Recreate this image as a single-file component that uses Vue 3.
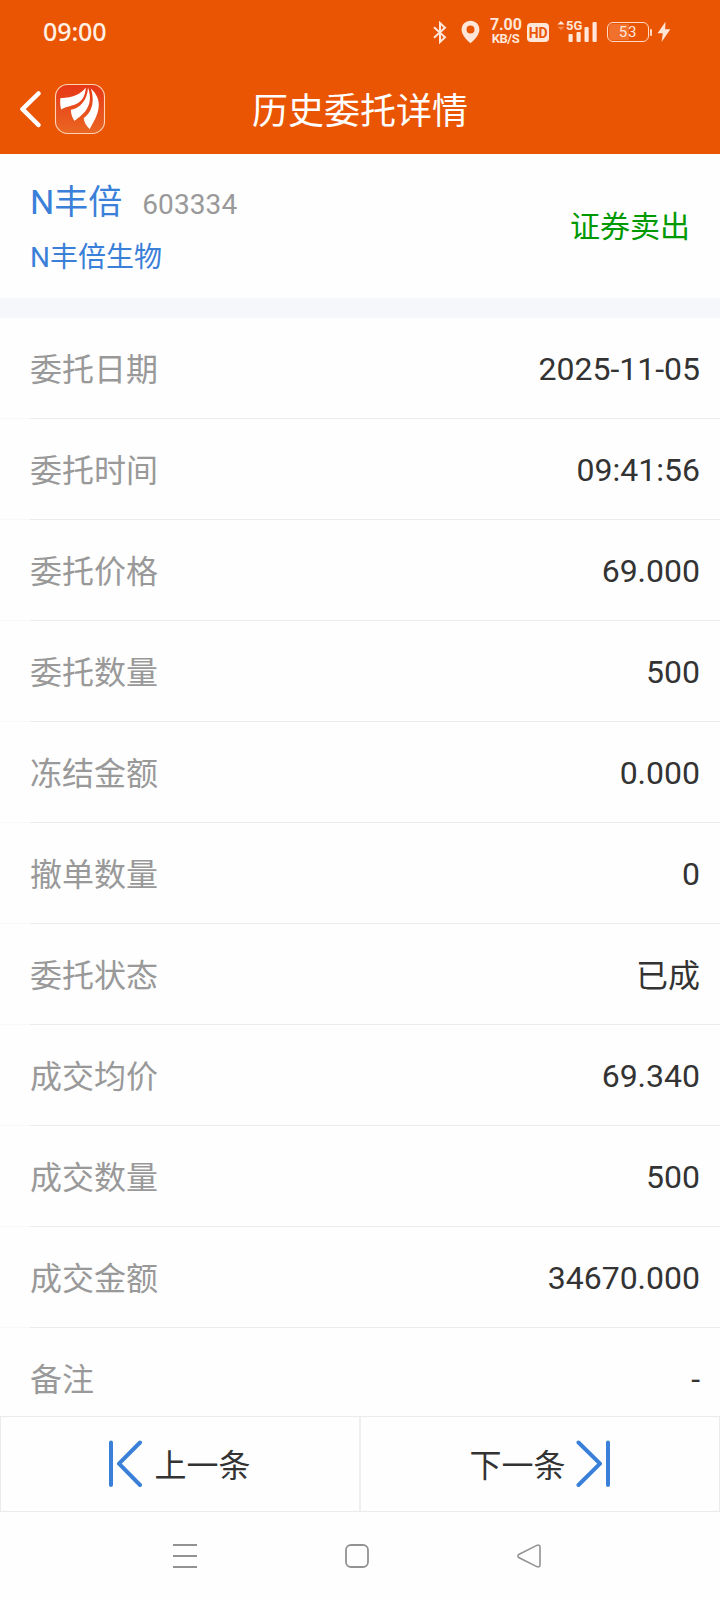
<script setup>
const rows = [
  ['委托日期', '2025-11-05'],
  ['委托时间', '09:41:56'],
  ['委托价格', '69.000'],
  ['委托数量', '500'],
  ['冻结金额', '0.000'],
  ['撤单数量', '0'],
  ['委托状态', '已成'],
  ['成交均价', '69.340'],
  ['成交数量', '500'],
  ['成交金额', '34670.000'],
  ['备注', '-'],
]
</script>

<template>
  <div class="page">
    <header class="top">
      <div class="status">
        <span class="clock">09:00</span>
        <div class="indicators">
          <svg class="bt" width="14" height="23" viewBox="0 0 14 23" fill="none" stroke="#ffe6d8" stroke-width="2">
            <path d="M1 6.2L12 16.3L7 21V2L12 6.7L1 16.8" />
          </svg>
          <svg class="pin" width="19" height="24" viewBox="0 0 19 24">
            <path fill="#ffe6d8" fill-rule="evenodd" d="M9.5 .7C4.500 .7 .6 4.500 .6 9.400C.6 13.800 3.800 18.300 9.500 23.300C15.200 18.300 18.400 13.800 18.400 9.400C18.400 4.500 14.500 .7 9.500 .7ZM9.500 5.500A4 4 0 1 1 9.500 13.500A4 4 0 0 1 9.500 5.500Z" />
          </svg>
          <div class="speed">7.00<br><small>KB/S</small></div>
          <span class="hd">HD</span>
          <div class="signal">
            <svg class="bars" width="41" height="24" viewBox="0 0 41 24">
              <path fill="#ffe6d8" d="M.5 4.500L4 1L7.500 4.500Z" />
              <path fill="#f58a52" d="M.5 6.800L4 10.300L7.500 6.800Z" />
              <g fill="#ffe6d8">
                <rect x="11.500" y="14" width="4.200" height="8" rx="1" />
                <rect x="19.500" y="12" width="4.200" height="10" rx="1" />
                <rect x="27.500" y="7" width="4.200" height="15" rx="1" />
                <rect x="35.500" y="2" width="4.200" height="20" rx="1" />
              </g>
            </svg>
            <span class="net">5G</span>
          </div>
          <div class="battery"><span>53</span></div>
          <i class="cap"></i>
          <svg class="bolt" width="14" height="22" viewBox="0 0 14 22">
            <path fill="#ffe6d8" d="M8.500 .8L.6 12.200H5.800L4.600 21L13.300 8.200H8.100Z" />
          </svg>
        </div>
      </div>
      <nav class="titlebar">
        <div class="left">
          <svg width="24" height="38" viewBox="0 0 24 38" fill="none" stroke="#fff" stroke-width="4.500" stroke-linecap="round" stroke-linejoin="round">
            <path d="M19.500 3.500L3.500 19.200L19.500 35" />
          </svg>
          <svg class="logo" width="52" height="52" viewBox="0 0 52 52">
            <defs>
              <linearGradient id="tile" x1="0" y1="0" x2="0" y2="1">
                <stop offset="0" stop-color="#e63716" />
                <stop offset="1" stop-color="#ea6722" />
              </linearGradient>
            </defs>
            <rect x="1.500" y="1.500" width="49" height="49" rx="12" fill="url(#tile)" stroke="#ffd2b5" stroke-width="1.100" />
            <g fill="#fff">
              <path d="M31.800 4.500C27 11 20 14.700 6.300 15.200C6 19.500 6.200 23 7.200 26.500C14 21.500 31 24.500 31.800 4.500Z" />
              <path d="M34 4.500C33.500 17 26 25.500 16.800 26.800C17 31 18 34.500 20.500 38C25 33.500 41.500 26 34 4.500Z" />
              <path d="M36.800 5.500C41 18 38 29 29.700 35C30 39 32 42.500 35.800 46.300C38.500 39 54 21 36.800 5.500Z" />
            </g>
          </svg>
        </div>
        <h1>历史委托详情</h1>
      </nav>
    </header>

    <section class="stock">
      <div>
        <div class="nameline"><span class="name">N丰倍</span><span class="code">603334</span></div>
        <div class="full">N丰倍生物</div>
      </div>
      <span class="side">证券卖出</span>
    </section>

    <dl class="list">
      <div v-for="[label, value] in rows" :key="label" class="row">
        <dt>{{ label }}</dt>
        <dd>{{ value }}</dd>
      </div>
    </dl>

    <div class="pager">
      <button class="prev">
        <svg width="34" height="48" viewBox="0 0 34 48" fill="none" stroke="#3a80d9" stroke-width="4" stroke-linecap="round" stroke-linejoin="round">
          <path d="M2 2.500V45M31 2.500L10 23.700L31 45" />
        </svg>
        <span>上一条</span>
      </button>
      <button class="next">
        <span>下一条</span>
        <svg width="34" height="48" viewBox="0 0 34 48" fill="none" stroke="#3a80d9" stroke-width="4" stroke-linecap="round" stroke-linejoin="round">
          <path d="M32 2.500V45M2.500 2.500L24 23.700L2.500 45" />
        </svg>
      </button>
    </div>

    <footer class="sysnav">
      <svg width="24" height="26" viewBox="0 0 24 26" stroke="#929292" stroke-width="2">
        <path d="M0 2H24M0 13H24M0 24H24" />
      </svg>
      <svg width="26" height="26" viewBox="0 0 26 26" fill="none" stroke="#929292" stroke-width="1.800">
        <rect x="2" y="2" width="22" height="22" rx="5" />
      </svg>
      <svg width="26" height="26" viewBox="0 0 26 26" fill="none" stroke="#929292" stroke-width="1.600">
        <path d="M2.700 11.500L20.800 2.400Q24 1.200 24 4.500V21.500Q24 24.800 20.800 23.600L2.700 14.500Q1 13 2.700 11.500Z" />
      </svg>
    </footer>
  </div>
</template>

<style>
body { margin: 0; background: #fff; }
</style>

<style scoped>
.page {
  width: 720px;
  height: 1600px;
  display: flex;
  flex-direction: column;
  overflow: hidden;
  background: #fefefe;
  color: #333;
  font-family: Roboto, "Noto Sans CJK SC", sans-serif;
}
.top { height: 154px; flex: none; background: #ea5504; color: #fff; }
.status { height: 64px; display: flex; justify-content: space-between; box-sizing: border-box; padding: 0 49px 0 43px; }
.clock { font: 500 25px/63px "Noto Sans", sans-serif; letter-spacing: -.1px; color: #fff0e4; }
.indicators { display: flex; align-items: center; color: #ffe6d8; }
.bt { margin-right: 14px; }
.pin { margin-right: 10px; }
.speed { width: 31px; margin-right: 6px; font-size: 16px; font-weight: 700; line-height: 12.500px; letter-spacing: -.1px; text-align: center; white-space: nowrap; }
.speed small { font-size: 13px; letter-spacing: -.5px; }
.hd { width: 22px; height: 19px; margin: 1px 8px 0 0; border-radius: 4px; background: #ffe6d8; color: #ea5504; font-size: 14px; font-weight: 700; line-height: 20px; letter-spacing: -.3px; text-align: center; }
.signal { position: relative; width: 41px; height: 24px; margin-right: 9px; }
.net { position: absolute; left: 9px; top: 0; background: #ea5504; font-size: 13px; font-weight: 700; line-height: 12px; }
.battery { box-sizing: border-box; width: 42px; height: 20px; border: 1.500px solid #ffd9c2; border-radius: 6px; padding: 1px; display: flex; }
.battery span { flex: 1; border-radius: 3px; background: linear-gradient(90deg, #f0702c 53%, transparent 53%); font-size: 15px; line-height: 17px; letter-spacing: .8px; text-align: center; }
.cap { width: 2px; height: 7px; margin: 0 5px 0 1px; border-radius: 1px; background: #ffd9c2; }
.titlebar { height: 90px; display: grid; grid-template-columns: 1fr auto 1fr; align-items: start; }
.left { display: flex; align-items: center; padding: 19px 0 0 19px; }
.logo { margin-left: 11px; }
h1 { margin: 0; font-size: 36px; line-height: 97px; font-weight: 400; }
.stock { box-sizing: border-box; height: 164px; flex: none; border-bottom: 20px solid #f5f7fa; display: flex; justify-content: space-between; padding: 23px 30px 0; }
.nameline { height: 54px; display: flex; align-items: baseline; line-height: 51px; }
.name { color: #3a80d9; font-size: 34px; }
.code { margin-left: 20px; color: #999; font-size: 28px; letter-spacing: .1px; }
.full { color: #3a80d9; font-size: 28px; line-height: 54px; }
.side { color: #090; font-size: 30px; line-height: 100px; }
.list { flex: 1; min-height: 0; margin: 0; overflow: hidden; }
.row { box-sizing: border-box; height: 101px; display: flex; justify-content: space-between; padding: 0 20px 0 30px; font-size: 32px; background: linear-gradient(90deg, #f8f8f8 30px, #ebebeb 30px) 0 100% / 100% 1px no-repeat; }
dt { color: #999; line-height: 104px; }
dd { margin: 0; line-height: 102px; }
.row:nth-child(7) dd { line-height: 104px; }
.pager { height: 96px; flex: none; display: flex; box-sizing: border-box; border: 1px solid #ebebeb; }
button { flex: 1; display: flex; align-items: center; justify-content: center; box-sizing: border-box; border: 0; padding: 0; background: transparent; color: #333; font: inherit; font-size: 32px; }
.prev { flex: none; width: 359px; border-right: 1px solid #efefef; }
.next { border-left: 1px solid #efefef; padding-right: 1px; }
button span { padding-bottom: 3px; }
.prev span { margin-left: 11px; }
.next span { margin-right: 10px; }
.sysnav { height: 88px; flex: none; display: flex; justify-content: space-between; box-sizing: border-box; padding: 31px 178px 0 173px; }
</style>
